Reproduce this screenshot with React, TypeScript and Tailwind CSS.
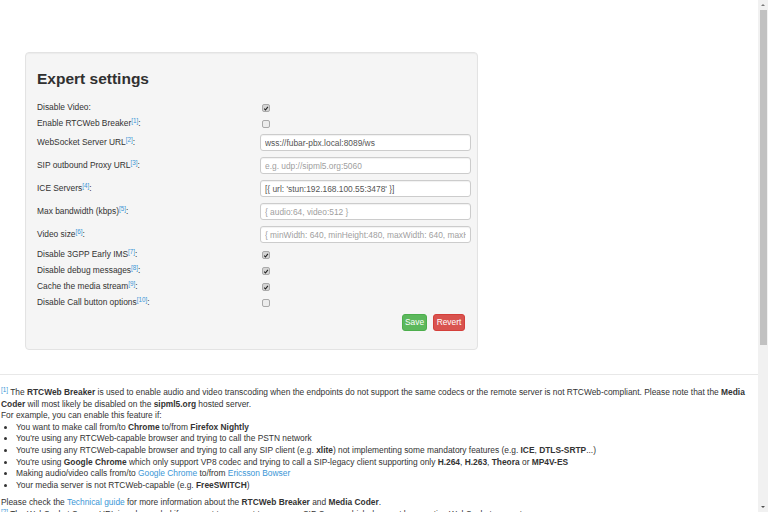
const LINK = "text-[#3a96d6]";

function Sup({ n }: { n: number }) {
  return <sup className={`text-[6.3px] ${LINK}`}>[{n}]</sup>;
}

function Check({ on }: { on?: boolean }) {
  return (
    <span
      className={`ml-[2px] flex h-[8px] w-[8px] items-center justify-center rounded-[2px] border border-[#a9a9a9] ${
        on ? "bg-[#d4d4d4]" : "bg-[#ececec]"
      }`}
    >
      {on && (
        <svg viewBox="0 0 8 8" className="h-[7px] w-[7px]">
          <path d="M1.6 4.3 L3.3 6 L6.5 1.9" stroke="#222" strokeWidth="1.5" fill="none" />
        </svg>
      )}
    </span>
  );
}

function CheckRow({ label, on }: { label: React.ReactNode; on?: boolean }) {
  return (
    <div className="flex h-[16px] items-center">
      <div className="w-[223px]">{label}</div>
      <Check on={on} />
    </div>
  );
}

function InputRow({
  label,
  value,
  placeholder,
}: {
  label: React.ReactNode;
  value?: string;
  placeholder?: string;
}) {
  return (
    <div className="flex items-center pt-[2px] pb-[4px]">
      <div className="w-[223px]">{label}</div>
      <input
        readOnly
        value={value}
        placeholder={placeholder}
        className="h-[17px] w-[211px] rounded-[3px] border border-[#cccccc] bg-white px-[4px] text-[8.4px] text-[#555] shadow-[inset_0_1px_1px_rgba(0,0,0,0.06)] outline-none placeholder:text-[#a0a0a0]"
      />
    </div>
  );
}

function B({ children }: { children: React.ReactNode }) {
  return <b className="font-bold text-[#333]">{children}</b>;
}

function A({ children }: { children: React.ReactNode }) {
  return <a className={LINK}>{children}</a>;
}

export default function App() {
  return (
    <div className="flex h-[512px] w-full overflow-hidden bg-white font-['Liberation_Sans',Arial,sans-serif] text-[8.4px] leading-[11.6px] text-[#333]">
      <div className="w-[758px] shrink-0">
        <div className="px-[25px] pt-[52px]">
          <div className="w-[453px] rounded-[4px] border border-[#e3e3e3] bg-[#f5f5f5] pt-[16px] pb-[18px] pl-[11px] pr-[6px] shadow-[inset_0_1px_1px_rgba(0,0,0,0.04)]">
            <h2 className="h-[20px] text-[15.5px] leading-[20px] font-bold text-[#303030]">Expert settings</h2>
            <div className="mt-[11px]">
              <CheckRow label="Disable Video:" on />
              <CheckRow label={<>Enable RTCWeb Breaker<Sup n={1} />:</>} />
              <InputRow label={<>WebSocket Server URL<Sup n={2} />:</>} value="wss://fubar-pbx.local:8089/ws" />
              <InputRow label={<>SIP outbound Proxy URL<Sup n={3} />:</>} placeholder="e.g. udp://sipml5.org:5060" />
              <InputRow label={<>ICE Servers<Sup n={4} />:</>} value="[{ url: 'stun:192.168.100.55:3478' }]" />
              <InputRow label={<>Max bandwidth (kbps)<Sup n={5} />:</>} placeholder="{ audio:64, video:512 }" />
              <InputRow
                label={<>Video size<Sup n={6} />:</>}
                placeholder="{ minWidth: 640, minHeight:480, maxWidth: 640, maxHeight:480 }"
              />
              <CheckRow label={<>Disable 3GPP Early IMS<Sup n={7} />:</>} on />
              <CheckRow label={<>Disable debug messages<Sup n={8} />:</>} on />
              <CheckRow label={<>Cache the media stream<Sup n={9} />:</>} on />
              <CheckRow label={<>Disable Call button options<Sup n={10} />:</>} />
              <div className="mt-[3px] flex justify-end gap-[6px] pr-[6px]">
                <button className="h-[17px] w-[25px] rounded-[3px] border border-[#4cae4c] bg-[#5cb85c] text-[8.4px] text-white">
                  Save
                </button>
                <button className="h-[17px] w-[32px] rounded-[3px] border border-[#d43f3a] bg-[#d9534f] text-[8.4px] text-white">
                  Revert
                </button>
              </div>
            </div>
          </div>
        </div>

        <div className="mt-[24px] border-t border-[#e8e8e8] pt-[12px] pl-[1px] pr-[4px]">
          <p>
            <Sup n={1} /> The <B>RTCWeb Breaker</B> is used to enable audio and video transcoding when the endpoints do
            not support the same codecs or the remote server is not RTCWeb-compliant. Please note that the{" "}
            <B>Media Coder</B> will most likely be disabled on the <B>sipml5.org</B> hosted server.
            <br />
            For example, you can enable this feature if:
          </p>
          <ul className="mb-[6px] list-disc pl-[15px]">
            <li>
              You want to make call from/to <B>Chrome</B> to/from <B>Firefox Nightly</B>
            </li>
            <li>You're using any RTCWeb-capable browser and trying to call the PSTN network</li>
            <li>
              You're using any RTCWeb-capable browser and trying to call any SIP client (e.g. <B>xlite</B>) not
              implementing some mandatory features (e.g. <B>ICE</B>, <B>DTLS-SRTP</B>...)
            </li>
            <li>
              You're using <B>Google Chrome</B> which only support VP8 codec and trying to call a SIP-legacy client
              supporting only <B>H.264</B>, <B>H.263</B>, <B>Theora</B> or <B>MP4V-ES</B>
            </li>
            <li>
              Making audio/video calls from/to <A>Google Chrome</A> to/from <A>Ericsson Bowser</A>
            </li>
            <li>
              Your media server is not RTCWeb-capable (e.g. <B>FreeSWITCH</B>)
            </li>
          </ul>
          <p>
            Please check the <A>Technical guide</A> for more information about the <B>RTCWeb Breaker</B> and{" "}
            <B>Media Coder</B>.
            <br />
            <Sup n={2} /> The WebSocket Server URL is only needed if you want to connect to your own SIP Server which
            does not have native WebSocket support.
          </p>
        </div>
      </div>

      {/* scrollbar */}
      <div className="flex w-[10px] shrink-0 flex-col items-center bg-[#f1f1f1]">
        <svg viewBox="0 0 10 10" className="h-[10px] w-[10px]">
          <path d="M3 6 L5 4 L7 6 Z" fill="#7a7a7a" />
        </svg>
        <div className="h-[335px] w-[7px] bg-[#c1c1c1]" />
        <div className="flex-1" />
        <svg viewBox="0 0 10 10" className="h-[10px] w-[10px]">
          <path d="M3 4 L5 6 L7 4 Z" fill="#505050" />
        </svg>
      </div>
    </div>
  );
}
